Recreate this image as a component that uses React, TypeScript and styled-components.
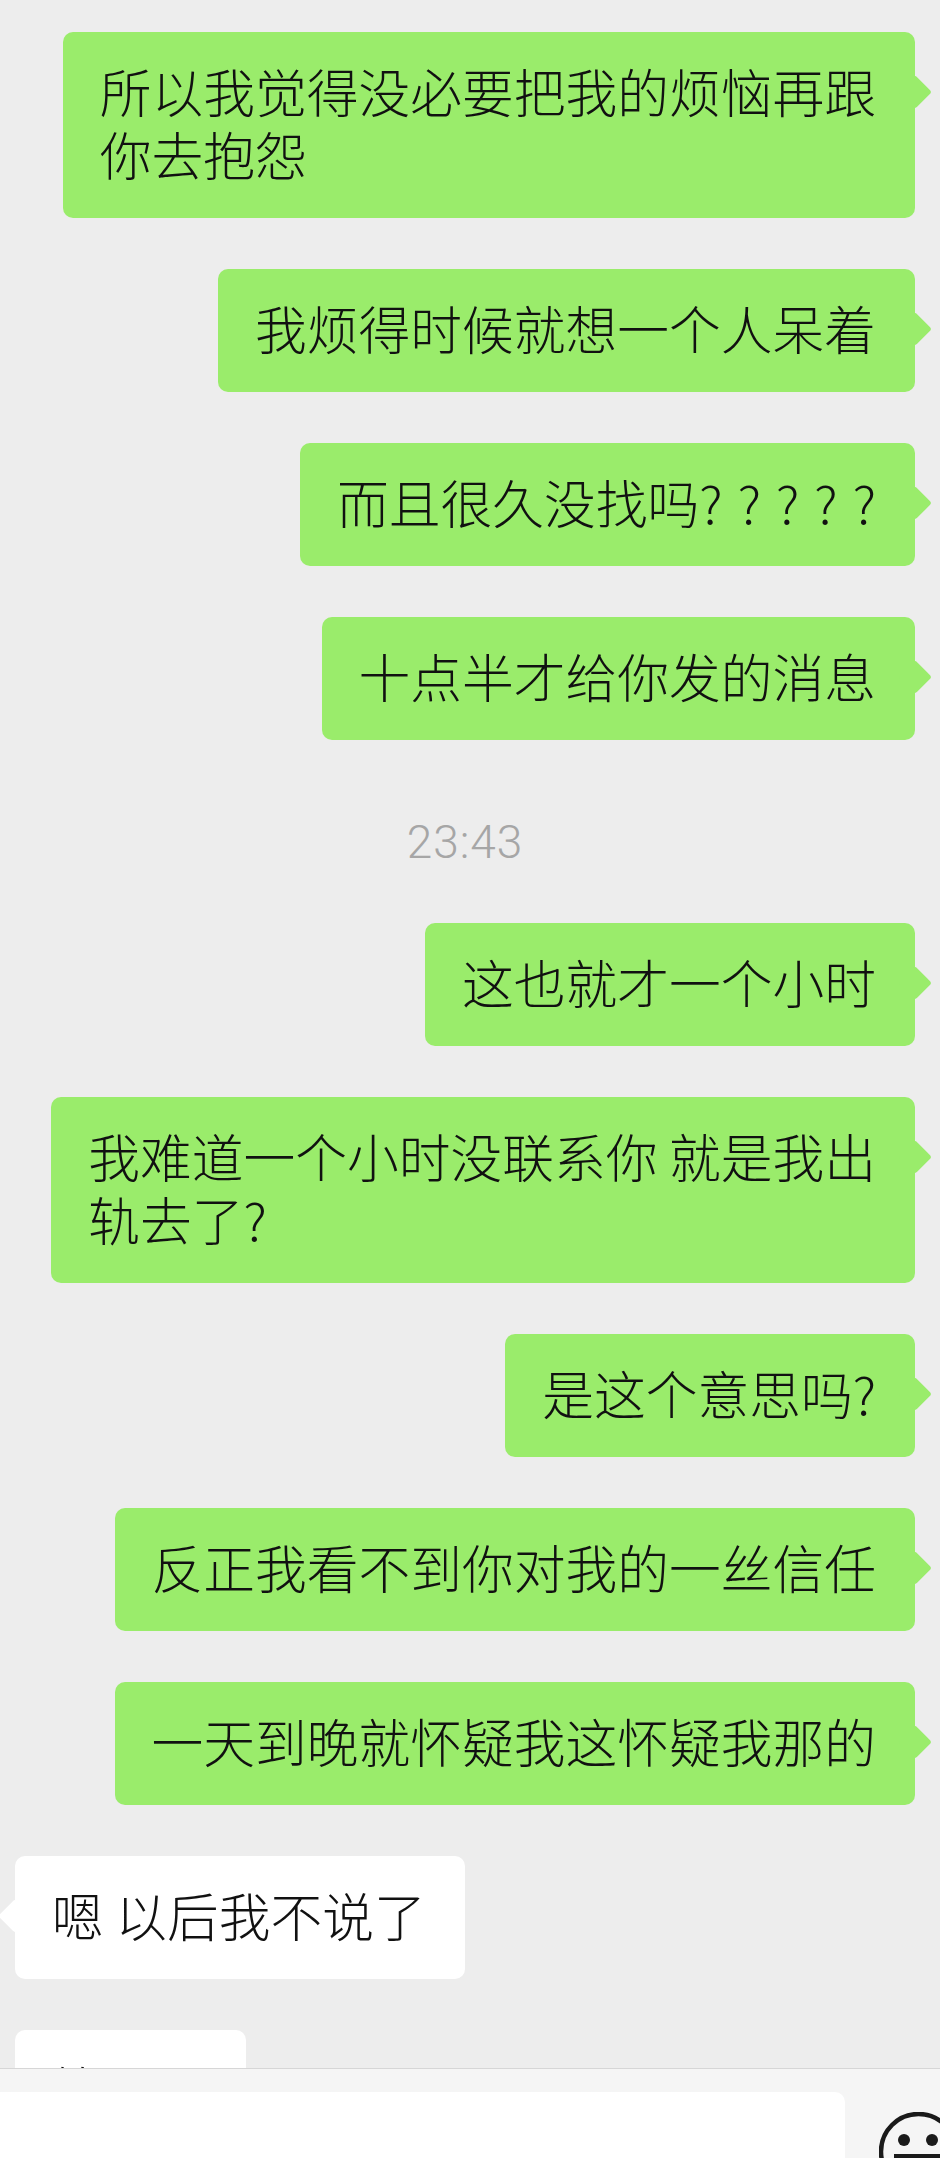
import styled, { createGlobalStyle } from 'styled-components';

const GlobalStyle = createGlobalStyle`
  html, body {
    margin: 0;
    padding: 0;
    background: #ededed;
  }
`;

const Page = styled.div`
  width: 940px;
  height: 2158px;
  display: flex;
  flex-direction: column;
  overflow: hidden;
  background: #ededed;
  font-family: "Noto Sans CJK SC", "Liberation Sans", sans-serif;
`;

const ChatArea = styled.div`
  flex: 1;
  min-height: 0;
  overflow: hidden;
  display: flex;
  flex-direction: column;
  gap: 51px;
  padding: 32px 25px 0 15px;
`;

const Row = styled.div<{ $mine?: boolean }>`
  display: flex;
  flex-shrink: 0;
  justify-content: ${({ $mine }) => ($mine ? 'flex-end' : 'flex-start')};
`;

const Bubble = styled.div<{ $mine?: boolean }>`
  position: relative;
  padding: 27px 39px 33px 37px;
  border-radius: 10px;
  background: ${({ $mine }) => ($mine ? '#9aec6b' : '#ffffff')};
  color: #111111;
  font-size: 51.75px;
  line-height: 63px;
  font-weight: 300;
  white-space: pre;

  &::after {
    content: '';
    position: absolute;
    top: 48px;
    width: 24px;
    height: 24px;
    border-radius: 3px;
    background: inherit;
    transform: rotate(45deg);
    ${({ $mine }) => ($mine ? 'right: -12px;' : 'left: -12px;')}
  }
`;

const WideMarks = styled.span`
  letter-spacing: 15px;
  margin-right: -15px;
`;

const TimeStamp = styled.div`
  flex-shrink: 0;
  margin: 26px 0 5px;
  text-align: center;
  color: #a6a6a6;
  font-family: Roboto, "Liberation Sans", sans-serif;
  font-size: 46px;
  font-weight: 300;
  letter-spacing: 1px;
  line-height: 50px;
`;

const InputBar = styled.div`
  flex-shrink: 0;
  height: 90px;
  display: flex;
  align-items: flex-start;
  gap: 34px;
  padding-top: 23px;
  box-sizing: border-box;
  background: #f5f5f5;
  border-top: 1px solid #d6d6d6;
`;

const TextInput = styled.div`
  width: 845px;
  height: 90px;
  flex-shrink: 0;
  background: #ffffff;
  border-radius: 0 10px 10px 0;
`;

const EmojiIcon = styled.svg`
  width: 82px;
  height: 82px;
  flex-shrink: 0;
  margin-top: 20px;
`;

type Message =
  | { kind: 'time'; text: string }
  | { kind: 'bubble'; text: string; mine: boolean; marks?: string };

const messages: Message[] = [
  { kind: 'bubble', mine: true, text: '所以我觉得没必要把我的烦恼再跟\n你去抱怨' },
  { kind: 'bubble', mine: true, text: '我烦得时候就想一个人呆着' },
  { kind: 'bubble', mine: true, text: '而且很久没找吗', marks: '?????' },
  { kind: 'bubble', mine: true, text: '十点半才给你发的消息' },
  { kind: 'time', text: '23:43' },
  { kind: 'bubble', mine: true, text: '这也就才一个小时' },
  { kind: 'bubble', mine: true, text: '我难道一个小时没联系你 就是我出\n轨去了?' },
  { kind: 'bubble', mine: true, text: '是这个意思吗?' },
  { kind: 'bubble', mine: true, text: '反正我看不到你对我的一丝信任' },
  { kind: 'bubble', mine: true, text: '一天到晚就怀疑我这怀疑我那的' },
  { kind: 'bubble', mine: false, text: '嗯 以后我不说了' },
  { kind: 'bubble', mine: false, text: '算了吧' },
];

const App = () => {
  return (
    <Page>
      <GlobalStyle />
      <ChatArea>
        {messages.map((message) =>
          message.kind === 'time' ? (
            <TimeStamp key={message.text}>{message.text}</TimeStamp>
          ) : (
            <Row key={message.text} $mine={message.mine}>
              <Bubble $mine={message.mine}>
                {message.text}
                {message.marks && <WideMarks>{message.marks}</WideMarks>}
              </Bubble>
            </Row>
          ),
        )}
      </ChatArea>
      <InputBar>
        <TextInput />
        <EmojiIcon viewBox="0 0 82 82" fill="none">
          <circle cx="39.5" cy="39.5" r="37.5" stroke="#1a1a1a" strokeWidth="4.5" />
          <circle cx="25" cy="28" r="6" fill="#1a1a1a" />
          <circle cx="53" cy="28" r="6" fill="#1a1a1a" />
          <rect x="15" y="42" width="49" height="6" fill="#1a1a1a" />
        </EmojiIcon>
      </InputBar>
    </Page>
  );
};

export default App;
